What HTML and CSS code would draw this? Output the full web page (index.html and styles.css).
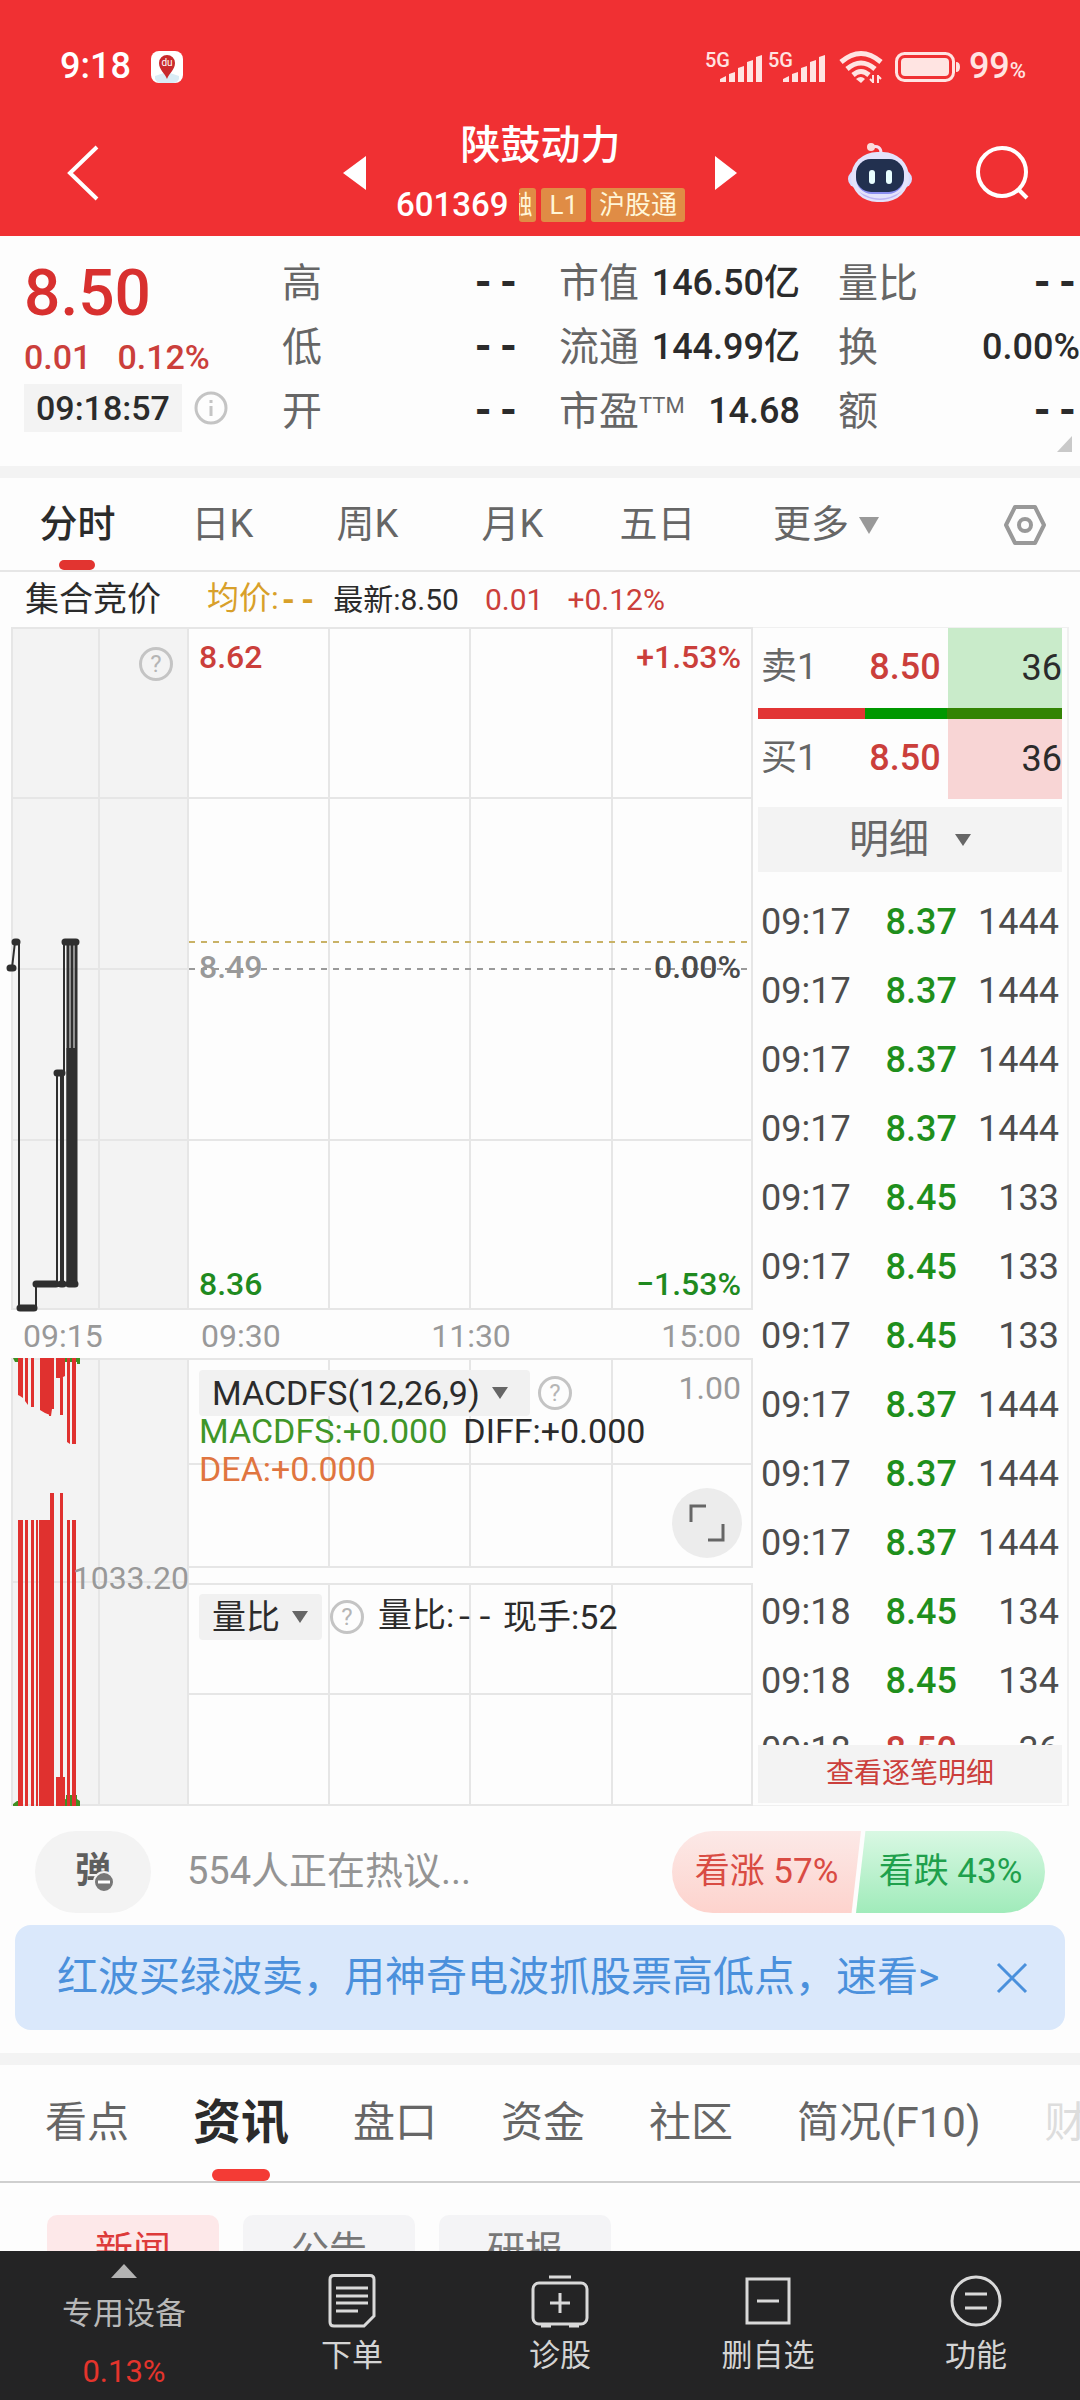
FILE: index.html
```html
<!DOCTYPE html>
<html lang="zh-CN">
<head>
<meta charset="utf-8">
<meta name="viewport" content="width=device-width, initial-scale=1">
<title>陕鼓动力 601369</title>
<link rel="stylesheet" href="styles.css">
</head>
<body>
<header class="top">
  <div class="status">
    <span class="clock">9:18</span>
    <svg class="map-app" width="32" height="32" viewBox="0 0 32 32"><rect width="32" height="32" rx="8" fill="#fff"/><path d="M4 25l12-4 12 4v3q-2 4-6 4H10q-4 0-6-4z" fill="#d9ecf5"/><path d="M16 28c-2-6-8-9-8-16a8 8 0 0 1 16 0c0 7-6 10-8 16z" fill="#c92a2c"/><text x="16" y="15" font-size="10" fill="#fff" text-anchor="middle">du</text></svg>
    <span class="grow"></span>
    <svg class="signal" width="57" height="34" viewBox="0 0 57 34"><text x="0" y="17" font-size="20" font-weight="500" fill="#ffe4e2">5G</text><path d="M15 32v-3l6-3v6zM24 32v-8l6-2v10zM33 32V18l6-2v16zM42 32V12l6-2v22zM51 32V7l6-2v27z" fill="#ffe4e2"/></svg>
    <svg class="signal" width="57" height="34" viewBox="0 0 57 34"><text x="0" y="17" font-size="20" font-weight="500" fill="#ffe4e2">5G</text><path d="M15 32v-3l6-3v6zM24 32v-8l6-2v10zM33 32V18l6-2v16zM42 32V12l6-2v22zM51 32V7l6-2v27z" fill="#ffe4e2"/></svg>
    <svg class="wifi" width="44" height="34" viewBox="0 0 44 34" fill="none" stroke="#ffe4e2" stroke-width="5"><path d="M2 12q20-17 40 0M8 19q14-12 28 0M14 25q8-7 16 0"/><path d="M17 29q5-4 9 0l-4 4z" fill="#ffe4e2" stroke="none"/><path d="M34 25v8M39 25v8M31 29l3 3M39 26l3 3" stroke-width="2"/></svg>
    <svg class="battery" width="66" height="30" viewBox="0 0 66 30"><rect x="1.500" y="1.500" width="57" height="27" rx="8" fill="none" stroke="#ffe4e2" stroke-width="3"/><rect x="6" y="6" width="48" height="18" rx="4" fill="#ffe4e2"/><path d="M61 10q4 0 4 5t-4 5z" fill="#ffe4e2"/></svg>
    <span class="charge">99<small>%</small></span>
  </div>
  <div class="bar">
    <button class="icon-btn back" aria-label="返回"><svg width="34" height="58" viewBox="0 0 34 58" fill="none" stroke="#fff" stroke-width="4"><path d="M31 3L4 29l27 26"/></svg></button>
    <div class="stock">
      <button class="icon-btn" aria-label="上一只"><svg width="23" height="34" viewBox="0 0 23 34"><path d="M0 17L23 0v34z" fill="#fff"/></svg></button>
      <div class="names">
        <h1>陕鼓动力</h1>
        <div class="code-row"><span class="code">601369</span><span class="tag cut">融</span><span class="tag">L1</span><span class="tag">沪股通</span></div>
      </div>
      <button class="icon-btn" aria-label="下一只"><svg width="22" height="34" viewBox="0 0 22 34"><path d="M22 17L0 0v34z" fill="#fff"/></svg></button>
    </div>
    <div class="tools">
      <button class="icon-btn" aria-label="智能助手"><svg width="64" height="60" viewBox="0 0 64 60"><path d="M24 4q9-2 9 6" fill="none" stroke="#f6dff0" stroke-width="3"/><circle cx="23" cy="4" r="4" fill="#fbdcdc"/><rect x="0" y="27" width="64" height="18" rx="9" fill="#d9dcff"/><rect x="3" y="9" width="58" height="50" rx="26" fill="#e3e2fb"/><path d="M10 48q22 15 44 0l-6 5q-16 8-32 0z" fill="#bdb5f5"/><rect x="8" y="16" width="48" height="35" rx="16" fill="#8b8ff0"/><rect x="8" y="16" width="48" height="33" rx="15" fill="#22304f"/><rect x="21" y="27" width="6" height="14" rx="3" fill="#e9feff"/><rect x="38" y="27" width="6" height="14" rx="3" fill="#e9feff"/></svg></button>
      <button class="icon-btn" aria-label="搜索"><svg width="54" height="54" viewBox="0 0 54 54" fill="none" stroke="#fff" stroke-width="4"><circle cx="26" cy="26" r="24"/><path d="M42 43l9 9"/></svg></button>
    </div>
  </div>
</header>

<section class="quote">
  <div class="last">
    <strong class="price">8.50</strong>
    <div class="change"><span>0.01</span><span>0.12%</span></div>
    <div class="time"><time>09:18:57</time><svg width="34" height="34" viewBox="0 0 34 34" fill="none" stroke="#c4c4c4" stroke-width="3"><circle cx="17" cy="17" r="15"/><path d="M17 15v10M17 9v3"/></svg></div>
  </div>
  <dl class="stats">
    <div><dt>高</dt><dd class="none">--</dd></div>
    <div><dt>低</dt><dd class="none">--</dd></div>
    <div><dt>开</dt><dd class="none">--</dd></div>
  </dl>
  <dl class="stats">
    <div><dt>市值</dt><dd>146.50亿</dd></div>
    <div><dt>流通</dt><dd>144.99亿</dd></div>
    <div><dt>市盈<sup>TTM</sup></dt><dd>14.68</dd></div>
  </dl>
  <dl class="stats">
    <div><dt>量比</dt><dd class="none">--</dd></div>
    <div><dt>换</dt><dd>0.00%</dd></div>
    <div><dt>额</dt><dd class="none">--</dd></div>
  </dl>
  <svg class="corner" width="15" height="16" viewBox="0 0 15 16"><path d="M15 0v16H0z" fill="#c9c9c9"/></svg>
</section>

<nav class="periods">
  <button class="on">分时</button>
  <button>日K</button>
  <button>周K</button>
  <button>月K</button>
  <button>五日</button>
  <button class="more">更多<svg width="20" height="17" viewBox="0 0 20 17"><path d="M0 0h20L10 17z" fill="#999"/></svg></button>
  <button class="set" aria-label="设置"><svg width="42" height="40" viewBox="0 0 42 40" fill="none" stroke="#999" stroke-width="4" stroke-linejoin="round"><path d="M11 2h20l9 18-9 18H11L2 20z"/><circle cx="21" cy="20" r="6"/></svg></button>
</nav>

<div class="legend">
  <span class="phase">集合竞价</span>
  <span class="avg">均价:<i>--</i></span>
  <span class="now">最新:8.50</span>
  <span class="up">0.01</span>
  <span class="up">+0.12%</span>
</div>

<main class="board">
  <div class="auction">
    <div class="pane shade price-pane">
      <svg class="plot" viewBox="0 0 178 683" preserveAspectRatio="none" fill="none"><path d="M0 1h178M0 171h178M0 342h178M0 513h178M0 682h178M1 0v683M88 0v683M177 0v683" stroke="#e6e6e6" stroke-width="2"/><g stroke="#2f2f2f"><path d="M1 341L4 315h4V681h17V657h21" stroke-width="2"/><path d="M46 656V446M52 656V446M53 446V315" stroke-width="2"/><path d="M51 656V446" stroke-width="4"/><path d="M57 656V315M61 656V315M65 656V315" stroke-width="3"/><path d="M60 656V421" stroke-width="9"/><path d="M-1 341h3M4 315h2M9 681h14M25 657h20M50 657h2M58 657h6M46 446h5M54 315h11" stroke-width="7" stroke-linecap="round"/></g></svg>
      <button class="help" aria-label="集合竞价说明">?</button>
    </div>
    <div class="axis"><span>09:15</span></div>
    <div class="pane shade flow-pane">
      <svg class="plot" viewBox="0 0 178 448" preserveAspectRatio="none"><path d="M0 1h178M0 224h178M0 447h178M1 0v448M88 0v448M177 0v448" stroke="#e6e6e6" stroke-width="2" fill="none"/><path d="M2 0h7v4H4zM51 0h18v6h-3V4H54v2h-3zM2 448v-2l4-3h4v5zM51 448v-6l4-1v-4h11v4l3 2v5z" fill="#3f8f22"/><g fill="#e0312f"><path d="M7 0h5v40l-3-2-2-1zM14 0h3v47l-3-4zM20 0h3v49h-3zM29 0h10v57l-5-2-5-3zM38 0h5v51h-2l-1 7h-2zM45 0h9v18l-4 2h-5zM49 0h3v57h-3zM56 0h3v86l-3-2zM61 0h4v86h-4z"/><path d="M7 162h5v286H7zM14 162h3v286h-3zM20 162h3v286h-3zM25 162h2v286h-2zM28 162h11v286H28zM39 135h4v313h-4zM49 135h3v313h-3zM56 162h3v286h-3zM61 162h4v286h-4zM45 419h9v29h-9z"/></g></svg>
      <span class="half">1033.20</span>
    </div>
  </div>

  <div class="trend">
    <div class="pane price-pane">
      <svg class="plot" viewBox="0 0 564 683" preserveAspectRatio="none" fill="none"><path d="M0 1h564M0 171h564M0 513h564M0 682h564M140 0v683M281 0v683M423 0v683M563 0v683" stroke="#e6e6e6" stroke-width="2"/><path d="M0 315h564" stroke="#c9b266" stroke-width="2" stroke-dasharray="6 6"/><path d="M0 342h564" stroke="#9a9a9a" stroke-width="2" stroke-dasharray="6 6"/></svg>
      <div class="scale up"><span>8.62</span><span>+1.53%</span></div>
      <div class="scale flat"><span>8.49</span><span>0.00%</span></div>
      <div class="scale down"><span>8.36</span><span>−1.53%</span></div>
    </div>
    <div class="axis"><span>09:30</span><span>11:30</span><span>15:00</span></div>
    <div class="pane macd-pane">
      <svg class="plot" viewBox="0 0 564 210" preserveAspectRatio="none" fill="none"><path d="M0 1h564M0 106h564M0 209h564M140 0v210M281 0v210M423 0v210M563 0v210" stroke="#e6e6e6" stroke-width="2"/></svg>
      <div class="row"><button class="pick wide">MACDFS(12,26,9)<svg width="16" height="12" viewBox="0 0 16 12"><path d="M0 0h16L8 12z" fill="#666"/></svg></button><button class="help" aria-label="MACDFS说明">?</button><span class="max">1.00</span></div>
      <div class="values"><span class="g">MACDFS:+0.000</span><span>DIFF:+0.000</span></div>
      <div class="values"><span class="o">DEA:+0.000</span></div>
      <button class="expand" aria-label="全屏"><svg width="36" height="38" viewBox="0 0 36 38" fill="none" stroke="#666" stroke-width="3"><path d="M2 18V2h15M34 20v16H19"/></svg></button>
    </div>
    <div class="pane ratio-pane">
      <svg class="plot" viewBox="0 0 564 223" preserveAspectRatio="none" fill="none"><path d="M0 1h564M0 111h564M0 222h564M140 0v223M281 0v223M423 0v223M563 0v223" stroke="#e6e6e6" stroke-width="2"/></svg>
      <div class="row"><button class="pick">量比<svg width="16" height="12" viewBox="0 0 16 12"><path d="M0 0h16L8 12z" fill="#666"/></svg></button><button class="help" aria-label="量比说明">?</button><span class="ratio">量比:<i>--</i></span><span>现手:52</span></div>
    </div>
  </div>

  <aside class="orders">
    <div class="level sell"><span>卖1</span><b>8.50</b><em>36</em></div>
    <div class="balance"><i class="b1"></i><i class="b2"></i><i class="b3"></i></div>
    <div class="level buy"><span>买1</span><b>8.50</b><em>36</em></div>
    <button class="detail">明细<svg width="16" height="12" viewBox="0 0 16 12"><path d="M0 0h16L8 12z" fill="#666"/></svg></button>
    <div class="ticks">
      <table>
        <tr><td>09:17</td><td class="g">8.37</td><td>1444</td></tr>
        <tr><td>09:17</td><td class="g">8.37</td><td>1444</td></tr>
        <tr><td>09:17</td><td class="g">8.37</td><td>1444</td></tr>
        <tr><td>09:17</td><td class="g">8.37</td><td>1444</td></tr>
        <tr><td>09:17</td><td class="g">8.45</td><td>133</td></tr>
        <tr><td>09:17</td><td class="g">8.45</td><td>133</td></tr>
        <tr><td>09:17</td><td class="g">8.45</td><td>133</td></tr>
        <tr><td>09:17</td><td class="g">8.37</td><td>1444</td></tr>
        <tr><td>09:17</td><td class="g">8.37</td><td>1444</td></tr>
        <tr><td>09:17</td><td class="g">8.37</td><td>1444</td></tr>
        <tr><td>09:18</td><td class="g">8.45</td><td>134</td></tr>
        <tr><td>09:18</td><td class="g">8.45</td><td>134</td></tr>
        <tr><td>09:18</td><td class="r">8.50</td><td>36</td></tr>
      </table>
    </div>
    <button class="all">查看逐笔明细</button>
  </aside>
</main>

<section class="talk">
  <button class="barrage" aria-label="弹幕">弹<svg width="22" height="22" viewBox="0 0 22 22"><circle cx="11" cy="11" r="10" fill="#777" stroke="#f3f3f3" stroke-width="2"/><path d="M5 11h12" stroke="#fff" stroke-width="3"/></svg></button>
  <a class="hot" href="#talk">554人正在热议...</a>
  <div class="vote"><button class="bull">看涨 57%</button><button class="bear">看跌 43%</button></div>
</section>

<section class="promo">
  <a href="#promo">红波买绿波卖，用神奇电波抓股票高低点，速看&gt;</a>
  <button class="icon-btn" aria-label="关闭"><svg width="30" height="30" viewBox="0 0 30 30" stroke="#4a90dc" stroke-width="3"><path d="M1 1l28 28M29 1L1 29"/></svg></button>
</section>

<nav class="topics">
  <a href="#a">看点</a>
  <a href="#b" class="on">资讯</a>
  <a href="#c">盘口</a>
  <a href="#d">资金</a>
  <a href="#e">社区</a>
  <a href="#f">简况(F10)</a>
  <a href="#g" class="fade">财务</a>
</nav>

<div class="chips">
  <button class="on">新闻</button>
  <button>公告</button>
  <button>研报</button>
</div>

<nav class="dock">
  <button class="sector"><svg width="26" height="14" viewBox="0 0 26 14"><path d="M13 0l13 14H0z" fill="#b3b3b3"/></svg><span>专用设备</span><span class="pct">0.13%</span></button>
  <button><svg width="48" height="54" viewBox="0 0 48 54" fill="none" stroke="#d9d9d9" stroke-width="3"><path d="M6 1.500h36q4 0 4 4V42L36 52H6q-4 0-4-4V5.500q0-4 4-4z"/><path d="M8 14h32M8 22h32M8 29h32M8 37h22"/></svg><span>下单</span></button>
  <button><svg width="58" height="54" viewBox="0 0 58 54" fill="none" stroke="#d9d9d9" stroke-width="3"><rect x="2" y="9" width="54" height="41" rx="6"/><path d="M18 3h22M29 19v20M19 29h20M10 52h10M38 52h10"/></svg><span>诊股</span></button>
  <button><svg width="48" height="54" viewBox="0 0 48 54" fill="none" stroke="#d9d9d9" stroke-width="3"><rect x="3" y="5" width="42" height="44"/><path d="M13 27h22"/></svg><span>删自选</span></button>
  <button><svg width="52" height="54" viewBox="0 0 52 54" fill="none" stroke="#d9d9d9" stroke-width="3"><circle cx="26" cy="27" r="24"/><path d="M15 20h22M15 34h22"/></svg><span>功能</span></button>
</nav>
</body>
</html>
```

FILE: styles.css
```css
* { box-sizing: border-box; }
body {
  margin: 0;
  background: #fdfdfd;
  color: #2b2b2b;
  font-family: Roboto, "Noto Sans CJK SC", sans-serif;
  font-size: 36px;
  line-height: 1.2;
  overflow-x: hidden;
}
button { margin: 0; padding: 0; border: 0; background: none; font: inherit; color: inherit; }
a { color: inherit; text-decoration: none; }
svg { flex: none; display: block; overflow: visible; }
i, em { font-style: normal; }
h1, dl, dd { margin: 0; }
.icon-btn { display: flex; align-items: center; }
.grow { flex: 1; }
.none, .avg i, .ratio i { font-family: "Liberation Mono", monospace; font-weight: 700; }

/* Status bar and title */
.top { background: #f03033; color: #fff; }
.status { display: flex; align-items: center; height: 110px; padding: 24px 54px 0 60px; }
.clock, .charge { font-weight: 500; }
.map-app { margin-left: 20px; }
.signal { margin-right: 6px; }
.wifi { margin: 0 12px 0 8px; }
.charge { margin-left: 8px; color: #ffe4e2; }
.charge small { font-size: 22px; }
.bar { display: grid; grid-template-columns: 1fr auto 1fr; align-items: center; height: 126px; padding: 0 50px; }
.back { margin-left: 16px; }
.stock { display: flex; align-items: center; gap: 30px; }
.names { display: flex; flex-direction: column; align-items: center; gap: 14px; padding-bottom: 6px; }
.names h1 { font-size: 40px; line-height: 56px; font-weight: 500; }
.code-row { display: flex; align-items: center; gap: 5px; }
.code { font-size: 33px; line-height: 34px; font-weight: 500; margin-right: 6px; }
.tag { height: 34px; padding: 0 8px; border-radius: 3px; background: #e08c45; color: #fff6d8; font-size: 26px; line-height: 34px; }
.cut { display: flex; justify-content: flex-end; width: 17px; padding: 0 4px 0 0; overflow: hidden; }
.tools { display: flex; justify-content: flex-end; align-items: center; gap: 64px; }

/* Quote summary */
.quote { position: relative; display: grid; grid-template-columns: 220fr 239fr 241fr 242fr; column-gap: 38px; height: 242px; padding: 16px 0 0 24px; border-bottom: 12px solid #f3f3f3; }
.last { color: #d8302f; white-space: nowrap; }
.price { display: block; font-size: 64px; line-height: 84px; font-weight: 500; }
.change { display: flex; gap: 26px; font-size: 34px; line-height: 42px; color: #cb3f3b; font-weight: 500; }
.time { display: flex; align-items: center; gap: 12px; margin-top: 6px; color: #2b2b2b; font-size: 34px; font-weight: 500; }
.time time { padding: 0 12px; background: #f3f3f3; line-height: 48px; }
.stats div { display: flex; justify-content: space-between; align-items: center; height: 64px; white-space: nowrap; }
.stats dt { color: #666; font-size: 40px; }
.stats dd { font-size: 36px; font-weight: 500; }
.stats .none { font-size: 42px; font-weight: 700; }
.stats sup { font-size: 22px; vertical-align: 12px; line-height: 1; }
.corner { position: absolute; right: 8px; bottom: 14px; }

/* Period tabs */
.periods { display: flex; height: 94px; padding: 2px 34px 0 5px; border-bottom: 2px solid #e6e6e6; color: #666; font-size: 38px; }
.periods button { position: relative; width: 145px; }
.periods .on { color: #2b2b2b; font-weight: 500; }
.periods .on::after { content: ""; position: absolute; left: 54px; bottom: 0; width: 36px; height: 10px; border-radius: 5px; background: #e23430; }
.periods .more { display: flex; align-items: center; justify-content: center; gap: 10px; width: 192px; }
.periods .set { display: flex; align-items: center; justify-content: flex-end; flex: 1; }

.legend { display: flex; align-items: center; height: 55px; padding: 0 25px; font-size: 30px; white-space: nowrap; }
.phase { font-size: 34px; margin-right: 46px; }
.avg { color: #d8a02a; font-size: 32px; margin-right: 16px; }
.now { margin-right: 26px; }
.up { color: #cb3f3b; }
.legend .up { margin-right: 24px; }

/* Chart board */
.board { display: grid; grid-template-columns: 178fr 564fr 316fr; padding: 0 11px; }
.auction, .trend { display: flex; flex-direction: column; min-width: 0; }
.pane { position: relative; }
.plot { position: absolute; left: 0; top: 0; width: 100%; height: 100%; }
.shade { background: #f3f3f3; }
.price-pane { height: 683px; display: flex; flex-direction: column; justify-content: space-between; padding: 10px 12px 6px 10px; }
.flow-pane { height: 448px; display: flex; align-items: center; justify-content: flex-end; padding-bottom: 8px; }
.axis { display: flex; justify-content: space-between; align-items: center; height: 48px; padding: 4px 12px 0; font-size: 32px; color: #999; }
.scale, .half, .row, .values, .help { position: relative; }
.scale { display: flex; justify-content: space-between; font-size: 32px; line-height: 40px; font-weight: 500; }
.flat { margin-bottom: 8px; color: #4a4a4a; }
.flat span:first-child { color: #999; }
.down { color: #1f8a1f; }
.half { font-size: 32px; color: #999; }
.help { flex: none; width: 34px; height: 34px; border: 3px solid #c4c4c4; border-radius: 50%; color: #b5b5b5; font-size: 24px; line-height: 28px; }
.shade .help { align-self: flex-end; margin: 10px 4px 0 0; }
.macd-pane { height: 210px; padding: 12px 12px 0 10px; margin-bottom: 15px; }
.ratio-pane { height: 223px; padding: 11px 12px 0 10px; }
.row { display: flex; align-items: center; font-size: 34px; white-space: nowrap; }
.macd-pane .row { margin-bottom: -4px; }
.pick { display: flex; align-items: center; gap: 12px; height: 46px; padding: 0 14px 0 13px; border-radius: 4px; background: #f1f1f1; }
.wide { padding-right: 22px; }
.row .help { margin: 0 14px 0 8px; }
.max { margin-left: auto; align-self: flex-start; font-size: 32px; line-height: 36px; color: #999; }
.ratio { margin-right: 8px; }
.ratio i { font-weight: 400; }
.values { display: flex; gap: 16px; font-size: 34px; line-height: 38px; white-space: nowrap; }
.g { color: #3f9628; }
.o { color: #e07540; }
.expand { position: absolute; right: 11px; bottom: 10px; display: flex; align-items: center; justify-content: center; width: 70px; height: 70px; border-radius: 50%; background: #ececec; }

/* Order book */
.orders { display: flex; flex-direction: column; min-width: 0; padding: 0 5px 2px; border: 2px solid #f0f0f0; border-width: 1px 2px 1px 0; }
.level { display: grid; grid-template-columns: 1fr auto 38%; align-items: center; height: 80px; padding-left: 3px; }
.level span { color: #666; }
.level b { padding-right: 7px; color: #cb3f3b; font-weight: 500; }
.level em { text-align: right; line-height: 80px; }
.sell em { background: #c9ebca; }
.buy em { background: #f8d5d5; }
.balance { display: flex; height: 11px; }
.b1 { flex: 107; background: #e23434; }
.b2 { flex: 81; background: #009800; }
.b3 { flex: 115; background: #338404; }
.detail { display: flex; align-items: center; justify-content: center; gap: 26px; height: 65px; margin-top: 8px; background: #f3f3f3; color: #666; font-size: 40px; }
.ticks { height: 0; flex-grow: 1; overflow: hidden; padding: 16px 3px 0; }
.ticks table { width: 100%; border-collapse: collapse; color: #4d4d4d; }
.ticks td { height: 69px; padding: 0; text-align: right; }
.ticks td:first-child { text-align: left; }
.ticks .g, .ticks .r { font-weight: 500; color: #1f8f1c; padding-right: 4px; }
.ticks .r { color: #cb3f3b; }
.all { height: 58px; background: #f3f3f3; color: #cb3f3b; font-size: 28px; }

/* Discussion */
.talk { display: flex; align-items: center; padding: 25px 35px 12px; }
.barrage { position: relative; width: 116px; height: 82px; border-radius: 41px; background: #f3f3f3; color: #5e5e5e; font-size: 36px; font-weight: 700; }
.barrage svg { position: absolute; left: 58px; top: 40px; }
.hot { flex: 1; margin-left: 36px; color: #949494; font-size: 38px; }
.vote { display: flex; font-size: 35px; }
.vote button { height: 82px; width: 189px; }
.bull { border-radius: 41px 0 0 41px; background: linear-gradient(#fce9e7, #fdd3cd); color: #d94b43; clip-path: polygon(0 0, 100% 0, 95% 100%, 0 100%); }
.vote .bear { margin-left: -5px; border-radius: 0 41px 41px 0; background: linear-gradient(#d9f8e3, #a0ebba); color: #1fa04c; clip-path: polygon(5% 0, 100% 0, 100% 100%, 0 100%); }

.promo { display: flex; align-items: center; justify-content: space-between; height: 105px; margin: 0 15px 23px; padding: 0 38px 0 42px; border-radius: 16px; background: #dae8fb; color: #4a90dc; font-size: 41px; white-space: nowrap; }

/* Topic tabs */
.topics { display: flex; align-items: center; gap: 64px; height: 130px; padding: 0 0 0 45px; border-top: 12px solid #f3f3f3; border-bottom: 2px solid #cfcfcf; color: #666; font-size: 42px; white-space: nowrap; overflow: hidden; }
.topics a { position: relative; line-height: 116px; }
.topics .on { color: #2b2b2b; font-size: 48px; font-weight: 700; }
.topics .on::after { content: ""; position: absolute; left: 19px; bottom: 0; width: 58px; height: 12px; border-radius: 6px; background: #f43b35; }
.topics .fade { color: #ddd; }

.chips { display: flex; gap: 24px; padding: 32px 47px 0; }
.chips button { width: 172px; height: 72px; border-radius: 10px; background: #f4f4f6; color: #777; font-size: 38px; }
.chips .on { background: #fde8e9; color: #dd3a3a; }

/* Bottom dock */
.dock { position: fixed; left: 0; right: 0; bottom: 0; display: grid; grid-template-columns: 248fr 208fr 208fr 208fr 208fr; height: 149px; background: #242425; color: #d4d4d4; font-size: 31px; line-height: 44px; }
.dock button { display: flex; flex-direction: column; align-items: center; gap: 6px; padding-top: 23px; }
.dock .sector { padding-top: 13px; gap: 14px; color: #b8b8b8; }
.dock .pct { color: #e5342c; }
```
